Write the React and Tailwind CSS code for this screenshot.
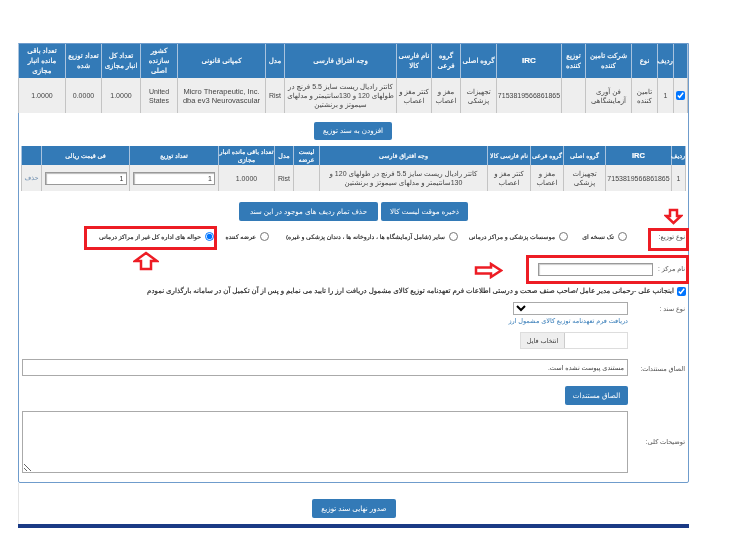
const w1 = [14, 16, 26, 46, 24, 65, 36, 29, 35, 112, 19, 88, 37, 39, 36, 47];
const h1 = ["", "ردیف", "نوع", "شرکت تامین کننده", "توزیع کننده", "IRC", "گروه اصلی", "گروه فرعی", "نام فارسی کالا", "وجه افتراق فارسی", "مدل", "کمپانی قانونی", "کشور سازنده اصلی", "تعداد کل انبار مجازی", "تعداد توزیع شده", "تعداد باقی مانده انبار مجازی"];
const desc = "کاتتر رادیال ریست سایز 5.5 فرنچ در طولهای 120 و 130سانتیمتر و مدلهای سیموتز و برنشتین";
const r1 = ["", "1", "تامین کننده", "فن آوری آزمایشگاهی", "", "7153819566861865", "تجهیزات پزشکی", "مغز و اعصاب", "کتتر مغز و اعصاب", desc, "Rist", "Micro Therapeutic, Inc. dba ev3 Neurovascular", "United States", "1.0000", "0.0000", "1.0000"];

const w2 = [14, 66, 42, 33, 43, 168, 26, 19, 56, 89, 88, 20];
const h2 = ["ردیف", "IRC", "گروه اصلی", "گروه فرعی", "نام فارسی کالا", "وجه افتراق فارسی", "لیست عرضه", "مدل", "تعداد باقی مانده انبار مجازی", "تعداد توزیع", "فی قیمت ریالی", ""];
const r2 = ["1", "7153819566861865", "تجهیزات پزشکی", "مغز و اعصاب", "کتتر مغز و اعصاب", desc, "", "Rist", "1.0000"];

function Cols({ w }) {
  return (
    <colgroup>
      {w.map((x, i) => (
        <col key={i} style={{ width: x }} />
      ))}
    </colgroup>
  );
}

function Td({ children, tight }) {
  return (
    <td className={`border-x border-[#c4c4c4] bg-[#eeeeee] py-0 text-center align-middle text-[7px] leading-[9px] text-[#444] ${tight ? "px-0" : "px-[2px]"}`}>
      {children}
    </td>
  );
}

function Btn({ children, className = "" }) {
  return (
    <button className={`rounded-[2px] bg-[#337ab7] text-center text-[7.2px] leading-none whitespace-nowrap text-white ${className}`}>
      {children}
    </button>
  );
}

function Radio({ label, checked, className = "" }) {
  return (
    <label className={`flex items-center gap-[4px] ${className}`}>
      <input type="radio" name="dist" defaultChecked={checked} className="m-0 h-[9px] w-[9px] shrink-0" />
      <span className="text-[6.2px] whitespace-nowrap text-[#222] [-webkit-text-stroke:0.15px_#222]">{label}</span>
    </label>
  );
}

function Row({ label, className = "", labelClass = "", children }) {
  return (
    <div className={`flex ${className}`}>
      <div className={`w-[60px] shrink-0 pr-[3px] text-[6.5px] text-[#555] ${labelClass}`}>{label}</div>
      <div className="w-[606px]">{children}</div>
    </div>
  );
}

export default function App() {
  return (
    <div className="relative h-[546px] w-[731px] overflow-hidden bg-white blur-[0.35px] font-['Liberation_Sans','DejaVu_Sans',sans-serif]">
      <div dir="rtl" className="ml-[18px] w-[671px] pt-[43px]">
        <div className="h-[440px] rounded-b-[2px] border border-[#6f9ccc]">
          <table className="w-[669px] table-fixed border-collapse">
            <Cols w={w1} />
            <thead>
              <tr className="h-[34px]">
                {h1.map((h, i) => (
                  <th key={i} className="border-x border-[#a9c3de] bg-[#337ab7] p-0 text-center align-middle text-[7px] leading-[10px] font-normal text-white [-webkit-text-stroke:0.2px_white]">
                    <span className={h === "IRC" ? "text-[8px] font-bold" : ""}>{h}</span>
                  </th>
                ))}
              </tr>
            </thead>
            <tbody>
              <tr className="h-[35px]">
                {r1.map((c, i) => (
                  <Td key={i} tight={i === 5}>
                    {i === 0 ? (
                      <input type="checkbox" defaultChecked className="m-0 h-[9px] w-[9px] align-middle" />
                    ) : (
                      <span dir={/[A-Z0-9]/.test(c) && i !== 9 ? "ltr" : undefined} className={i === 11 ? "text-[7.5px]" : ""}>{c}</span>
                    )}
                  </Td>
                ))}
              </tr>
            </tbody>
          </table>

          <div className="mt-[9px] flex justify-center">
            <Btn className="ml-[-1px] h-[18px] w-[78px]">افزودن به سند توزیع</Btn>
          </div>

          <table className="mr-[2px] mt-[6px] w-[664px] table-fixed border-collapse">
            <Cols w={w2} />
            <thead>
              <tr className="h-[19px]">
                {h2.map((h, i) => (
                  <th key={i} className="border-x border-[#a9c3de] bg-[#337ab7] p-0 text-center align-middle text-[6.3px] leading-[8px] font-normal text-white [-webkit-text-stroke:0.2px_white]">
                    <span className={h === "IRC" ? "text-[7.5px] font-bold" : ""}>{h}</span>
                  </th>
                ))}
              </tr>
            </thead>
            <tbody>
              <tr className="h-[26px]">
                {r2.map((c, i) => (
                  <Td key={i} tight={i === 1}>
                    <span dir={i === 1 || i === 7 || i === 8 ? "ltr" : undefined}>{c}</span>
                  </Td>
                ))}
                <Td tight>
                  <input readOnly value="1" className="h-[13px] w-[82px] border border-[#999] bg-white px-[2px] text-right text-[7px] text-[#333] shadow-[inset_1px_1px_1px_#bbb] outline-none" />
                </Td>
                <Td tight>
                  <input readOnly value="1" className="h-[13px] w-[82px] border border-[#999] bg-white px-[2px] text-right text-[7px] text-[#333] shadow-[inset_1px_1px_1px_#bbb] outline-none" />
                </Td>
                <td className="border-x border-[#c4c4c4] bg-[#eeeeee] p-0 text-center text-[6.5px] text-[#6f8fb0]">حذف</td>
              </tr>
            </tbody>
          </table>

          <div className="mt-[11px] flex gap-[3px] pr-[220px]">
            <Btn className="h-[19px] w-[87px]">ذخیره موقت لیست کالا</Btn>
            <Btn className="h-[19px] w-[139px]">حذف تمام ردیف های موجود در این سند</Btn>
          </div>

          <div className="mt-[7px] flex h-[18px] items-center">
            <div className="w-[61px] shrink-0 pr-[3px] text-[6.5px] whitespace-nowrap text-[#444]">نوع توزیع:</div>
            <Radio className="w-[59px]" label="تک نسخه ای" />
            <Radio className="w-[108px]" label="موسسات پزشکی و مراکز درمانی" />
            <Radio className="mr-[2px] w-[189px]" label="سایر (شامل آزمایشگاه ها ، داروخانه ها ، دندان پزشکی و غیره)" />
            <Radio className="w-[53px]" label="عرضه کننده" />
            <Radio className="mr-[2px] w-[115px]" label="حواله های اداره کل غیر از مراکز درمانی" checked />
          </div>

          <div className="mt-[16px] flex h-[14px] items-center">
            <div className="w-[35px] shrink-0 pr-[3px] text-[6.5px] whitespace-nowrap text-[#555]">نام مرکز :</div>
            <input readOnly className="h-[13px] w-[115px] border border-[#999] bg-white shadow-[inset_1px_1px_1px_#ccc] outline-none" />
          </div>

          <div className="mt-[10px] flex h-[11px] items-center">
            <input type="checkbox" defaultChecked className="m-0 mr-[2px] h-[9px] w-[9px] shrink-0" />
            <span className="mr-[3px] text-[7px] whitespace-nowrap text-[#222] [-webkit-text-stroke:0.15px_#222]">
              اینجانب علی -رحمانی  مدیر عامل /صاحب صنف  صحت و درستی اطلاعات فرم تعهدنامه توزیع کالای مشمول دریافت ارز را تایید می نمایم و پس از آن تکمیل آن در سامانه بارگذاری نمودم
            </span>
          </div>

          <Row className="mt-[5px]" label="نوع سند :" labelClass="pt-[2px]">
            <select className="block h-[13px] w-[115px] border border-[#aaa] bg-white text-[8px]"></select>
            <div className="mt-[1px] w-[115px] text-[6.5px] leading-[10px] whitespace-nowrap text-[#337ab7]">دریافت فرم تعهدنامه توزیع کالای مشمول ارز</div>
            <div className="mt-[6px] flex h-[17px] w-[108px] border border-[#ddd] bg-white">
              <div className="grow"></div>
              <div className="flex w-[44px] items-center justify-center border-r border-[#ccc] bg-[#eeeeee] text-[6.5px] text-[#444]">انتخاب فایل</div>
            </div>
          </Row>

          <Row className="mt-[10px]" label="الصاق مستندات:" labelClass="pt-[5px] whitespace-nowrap">
            <div className="flex h-[17px] w-[606px] items-center border border-[#aaa] bg-white px-[3px] text-[6.5px] text-[#444]">مستندی پیوست نشده است.</div>
          </Row>

          <Row className="mt-[10px]" label="">
            <div className="flex">
              <Btn className="h-[19px] w-[63px]">الصاق مستندات</Btn>
            </div>
          </Row>

          <Row className="mt-[6px]" label="توضیحات کلی:" labelClass="self-center whitespace-nowrap">
            <textarea readOnly className="block h-[62px] w-[606px] border border-[#aaa] bg-white outline-none"></textarea>
          </Row>
        </div>

        <div className="h-[41px] border-l border-[#e5e5e5] pt-[11px] text-center">
          <Btn className="h-[19px] w-[84px]">صدور نهایی سند توزیع</Btn>
        </div>
        <div className="h-[4px] bg-[#1a3a85]"></div>
      </div>

      <div className="absolute left-[648px] top-[228px] h-[23px] w-[41px] border-[3px] border-[#ed1c24]"></div>
      <div className="absolute left-[526px] top-[255px] h-[29px] w-[163px] border-[3px] border-[#ed1c24]"></div>
      <div className="absolute left-[84px] top-[226px] h-[24px] w-[133px] border-[3px] border-[#ed1c24]"></div>

      <svg className="absolute left-[664px] top-[208px] h-[17px] w-[19px]" viewBox="0 0 19 17">
        <polygon points="6,2 13,2 13,8 17,8 9.5,15 2,8 6,8" fill="#fff" stroke="#ed1c24" strokeWidth="2.5" />
      </svg>
      <svg className="absolute left-[474px] top-[262px] h-[17px] w-[29px]" viewBox="0 0 29 17">
        <polygon points="2,5.5 17,5.5 17,2 27,8.5 17,15 17,11.5 2,11.5" fill="#fff" stroke="#ed1c24" strokeWidth="2.5" />
      </svg>
      <svg className="absolute left-[133px] top-[251px] h-[20px] w-[26px]" viewBox="0 0 26 20">
        <polygon points="13,2 24,10 18,10 18,18 8,18 8,10 2,10" fill="#fff" stroke="#ed1c24" strokeWidth="2.5" />
      </svg>
    </div>
  );
}
